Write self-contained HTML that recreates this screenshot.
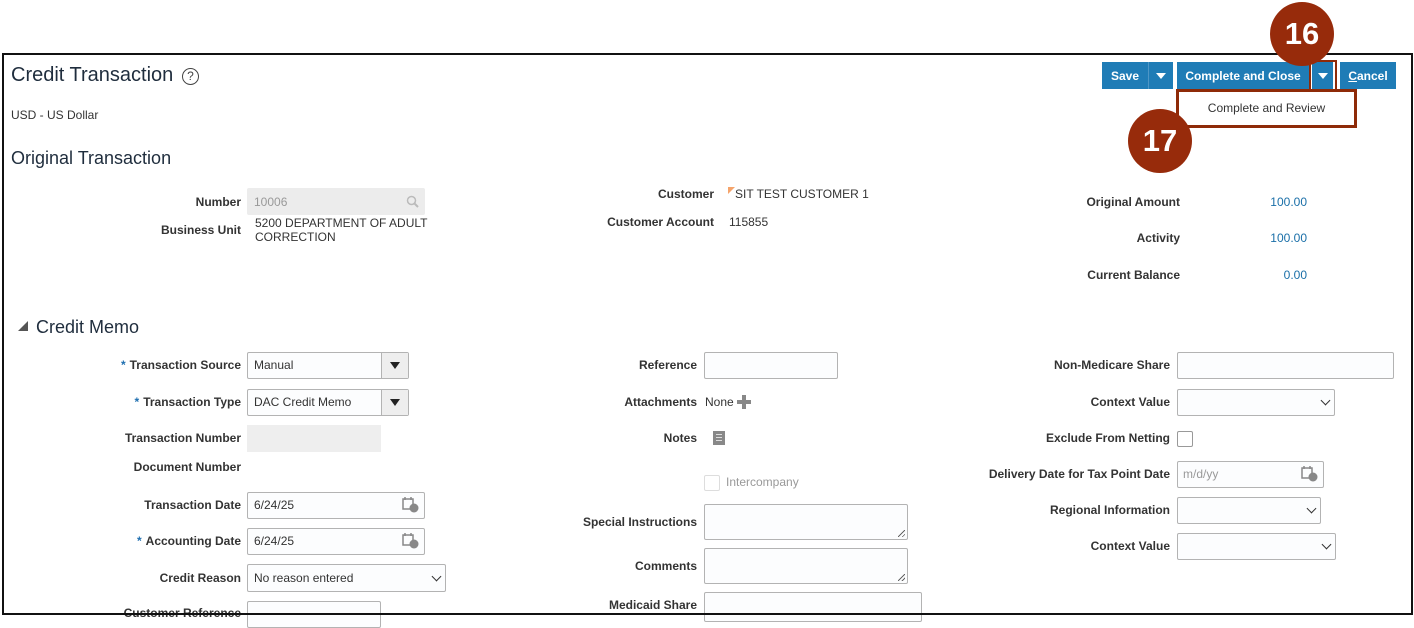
<!DOCTYPE html>
<html><head><meta charset="utf-8"><style>
*{box-sizing:border-box;margin:0;padding:0}
body{width:1414px;height:616px;background:#fff;position:relative;overflow:hidden;font-family:"Liberation Sans",Arial,sans-serif;color:#333}
.a{position:absolute;white-space:nowrap}
.l{position:absolute;font-size:12px;font-weight:bold;color:#333;text-align:right;transform:translateY(-50%)}
.v{position:absolute;font-size:12px;color:#333;transform:translateY(-50%)}
.in{position:absolute;border:1px solid #b3b3b3;border-radius:2px;background:#fcfdfe}
.t{position:absolute;font-size:12px;color:#333;transform:translateY(-50%)}
.btn{position:absolute;background:#1f7cb6;color:#fff;font-size:12px;font-weight:bold;display:flex;align-items:center;justify-content:center;height:27px;top:62px}
.star{color:#1f6fb0;margin-right:4px}
.chev{position:absolute;width:7px;height:7px;border-right:1.5px solid #333;border-bottom:1.5px solid #333;transform:rotate(45deg)}
.tri{position:absolute;width:0;height:0;border-left:5px solid transparent;border-right:5px solid transparent;border-top:7px solid #222}
.num{position:absolute;width:64px;height:64px;border-radius:50%;background:#972b0b;color:#fff;font-size:31px;font-weight:bold;display:flex;align-items:center;justify-content:center}
.grip{position:absolute;width:7px;height:7px;background:linear-gradient(135deg,transparent 45%,#666 45%,#666 55%,transparent 55%,transparent 75%,#666 75%,#666 85%,transparent 85%)}
</style></head><body>

<div class="a" style="left:11px;top:64px;font-size:20px;color:#1f2d3d">Credit Transaction</div>
<div class="a" style="left:182px;top:68px;width:17px;height:17px;border:1.5px solid #444;border-radius:50%;font-size:12px;text-align:center;line-height:14px;color:#444">?</div>
<div class="a" style="left:11px;top:108px;font-size:12px">USD - US Dollar</div>
<div class="a" style="left:11px;top:148px;font-size:18px;color:#1f2d3d">Original Transaction</div>

<div class="l" style="right:1173px;top:202px">Number</div>
<div class="in" style="left:247px;top:188px;width:178px;height:27px;background:#ececec;border:none"></div>
<div class="t" style="left:254px;top:202px;color:#999">10006</div>
<svg class="a" style="left:406px;top:195px" width="14" height="14"><circle cx="5.5" cy="5.5" r="4" fill="none" stroke="#bbb" stroke-width="1.5"/><line x1="8.5" y1="8.5" x2="12" y2="12" stroke="#bbb" stroke-width="2"/></svg>
<div class="l" style="right:1173px;top:230px">Business Unit</div>
<div class="a" style="left:255px;top:216px;font-size:12px;line-height:14px">5200 DEPARTMENT OF ADULT<br>CORRECTION</div>

<div class="l" style="right:700px;top:194px">Customer</div>
<div class="a" style="left:728px;top:187px;width:0;height:0;border-top:7px solid #f5a46b;border-right:7px solid transparent"></div>
<div class="v" style="left:735px;top:194px">SIT TEST CUSTOMER 1</div>
<div class="l" style="right:700px;top:222px">Customer Account</div>
<div class="v" style="left:729px;top:222px">115855</div>

<div class="l" style="right:234px;top:202px">Original Amount</div>
<div class="v" style="right:107px;top:202px;color:#1a6fa8">100.00</div>
<div class="l" style="right:234px;top:238px">Activity</div>
<div class="v" style="right:107px;top:238px;color:#1a6fa8">100.00</div>
<div class="l" style="right:234px;top:275px">Current Balance</div>
<div class="v" style="right:107px;top:275px;color:#1a6fa8">0.00</div>

<div class="a" style="left:18px;top:321px;width:0;height:0;border-left:10px solid transparent;border-bottom:10px solid #555"></div>
<div class="a" style="left:36px;top:317px;font-size:18px;color:#1f2d3d">Credit Memo</div>

<div class="l" style="right:1173px;top:365px"><span class="star">*</span>Transaction Source</div>
<div class="in" style="left:247px;top:352px;width:162px;height:27px"></div>
<div class="a" style="left:381px;top:353px;width:27px;height:25px;background:#eee;border-left:1px solid #b3b3b3"></div>
<div class="tri" style="left:390px;top:362px"></div>
<div class="t" style="left:254px;top:365px">Manual</div>

<div class="l" style="right:1173px;top:402px"><span class="star">*</span>Transaction Type</div>
<div class="in" style="left:247px;top:389px;width:162px;height:27px"></div>
<div class="a" style="left:381px;top:390px;width:27px;height:25px;background:#eee;border-left:1px solid #b3b3b3"></div>
<div class="tri" style="left:390px;top:399px"></div>
<div class="t" style="left:254px;top:402px">DAC Credit Memo</div>

<div class="l" style="right:1173px;top:438px">Transaction Number</div>
<div class="a" style="left:247px;top:425px;width:134px;height:27px;background:#eee"></div>
<div class="l" style="right:1173px;top:467px">Document Number</div>

<div class="l" style="right:1173px;top:505px">Transaction Date</div>
<div class="in" style="left:247px;top:492px;width:178px;height:27px"></div>
<div class="t" style="left:254px;top:505px">6/24/25</div>
<div class="l" style="right:1173px;top:541px"><span class="star">*</span>Accounting Date</div>
<div class="in" style="left:247px;top:528px;width:178px;height:27px"></div>
<div class="t" style="left:254px;top:541px">6/24/25</div>

<div class="l" style="right:1173px;top:578px">Credit Reason</div>
<div class="in" style="left:247px;top:564px;width:199px;height:28px"></div>
<div class="t" style="left:254px;top:578px">No reason entered</div>
<div class="chev" style="left:433px;top:573px"></div>
<div class="l" style="right:1173px;top:613px">Customer Reference</div>
<div class="in" style="left:247px;top:601px;width:134px;height:27px"></div>

<div class="l" style="right:717px;top:365px">Reference</div>
<div class="in" style="left:704px;top:352px;width:134px;height:27px"></div>
<div class="l" style="right:717px;top:402px">Attachments</div>
<div class="v" style="left:705px;top:402px">None</div>
<div class="a" style="left:737px;top:400px;width:14px;height:4px;background:#888"></div>
<div class="a" style="left:742px;top:395px;width:4px;height:14px;background:#888"></div>
<div class="l" style="right:717px;top:438px">Notes</div>
<div class="a" style="left:713px;top:431px;width:12px;height:14px;background:#888"></div>
<div class="a" style="left:716px;top:434px;width:6px;height:1px;background:#ddd;box-shadow:0 3px 0 #ddd,0 6px 0 #ddd"></div>
<div class="a" style="left:704px;top:475px;width:16px;height:16px;border:1px solid #ddd;border-radius:2px"></div>
<div class="v" style="left:726px;top:482px;color:#999">Intercompany</div>
<div class="l" style="right:717px;top:522px">Special Instructions</div>
<div class="in" style="left:704px;top:504px;width:204px;height:36px"></div>
<div class="grip" style="left:898px;top:530px"></div>
<div class="l" style="right:717px;top:566px">Comments</div>
<div class="in" style="left:704px;top:548px;width:204px;height:36px"></div>
<div class="grip" style="left:898px;top:574px"></div>
<div class="l" style="right:717px;top:605px">Medicaid Share</div>
<div class="in" style="left:704px;top:592px;width:218px;height:30px"></div>

<div class="l" style="right:244px;top:365px">Non-Medicare Share</div>
<div class="in" style="left:1177px;top:352px;width:217px;height:27px"></div>
<div class="l" style="right:244px;top:402px">Context Value</div>
<div class="in" style="left:1177px;top:389px;width:158px;height:27px"></div>
<div class="chev" style="left:1322px;top:397px"></div>
<div class="l" style="right:244px;top:438px">Exclude From Netting</div>
<div class="a" style="left:1177px;top:431px;width:16px;height:16px;border:1px solid #999;border-radius:2px"></div>
<div class="l" style="right:244px;top:474px">Delivery Date for Tax Point Date</div>
<div class="in" style="left:1177px;top:461px;width:147px;height:27px"></div>
<div class="t" style="left:1183px;top:474px;color:#999">m/d/yy</div>
<div class="l" style="right:244px;top:510px">Regional Information</div>
<div class="in" style="left:1177px;top:497px;width:144px;height:27px"></div>
<div class="chev" style="left:1308px;top:505px"></div>
<div class="l" style="right:244px;top:546px">Context Value</div>
<div class="in" style="left:1177px;top:533px;width:159px;height:27px"></div>
<div class="chev" style="left:1323px;top:541px"></div>

<svg class="a" style="left:402px;top:496px" width="17" height="17"><rect x="1" y="3" width="10" height="10" fill="none" stroke="#888" stroke-width="1.5"/><line x1="3" y1="1" x2="3" y2="4" stroke="#888" stroke-width="1.5"/><line x1="9" y1="1" x2="9" y2="4" stroke="#888" stroke-width="1.5"/><circle cx="12" cy="12" r="4.5" fill="#888"/></svg>
<svg class="a" style="left:402px;top:532px" width="17" height="17"><rect x="1" y="3" width="10" height="10" fill="none" stroke="#888" stroke-width="1.5"/><line x1="3" y1="1" x2="3" y2="4" stroke="#888" stroke-width="1.5"/><line x1="9" y1="1" x2="9" y2="4" stroke="#888" stroke-width="1.5"/><circle cx="12" cy="12" r="4.5" fill="#888"/></svg>
<svg class="a" style="left:1301px;top:465px" width="17" height="17"><rect x="1" y="3" width="10" height="10" fill="none" stroke="#888" stroke-width="1.5"/><line x1="3" y1="1" x2="3" y2="4" stroke="#888" stroke-width="1.5"/><line x1="9" y1="1" x2="9" y2="4" stroke="#888" stroke-width="1.5"/><circle cx="12" cy="12" r="4.5" fill="#888"/></svg>

<div class="a" style="left:2px;top:53px;width:1411px;height:562px;border:2px solid #111"></div>

<div class="btn" style="left:1102px;width:46px">Save</div>
<div class="btn" style="left:1148px;width:25px;border-left:1px solid #4d96c6"><span style="border-left:5px solid transparent;border-right:5px solid transparent;border-top:6px solid #fff"></span></div>
<div class="btn" style="left:1177px;width:132px">Complete and Close</div>
<div class="btn" style="left:1312px;width:21px"><span style="border-left:5px solid transparent;border-right:5px solid transparent;border-top:6px solid #fff"></span></div>
<div class="a" style="left:1309px;top:60px;width:28px;height:31px;border:2px solid #8e2a08"></div>
<div class="btn" style="left:1340px;width:56px"><u>C</u>ancel</div>

<div class="a" style="left:1176px;top:89px;width:181px;height:39px;border:3px solid #8e2a08;background:#fff;font-size:12px;text-align:center;line-height:33px">Complete and Review</div>

<div class="num" style="left:1270px;top:2px">16</div>
<div class="num" style="left:1128px;top:109px">17</div>
</body></html>
